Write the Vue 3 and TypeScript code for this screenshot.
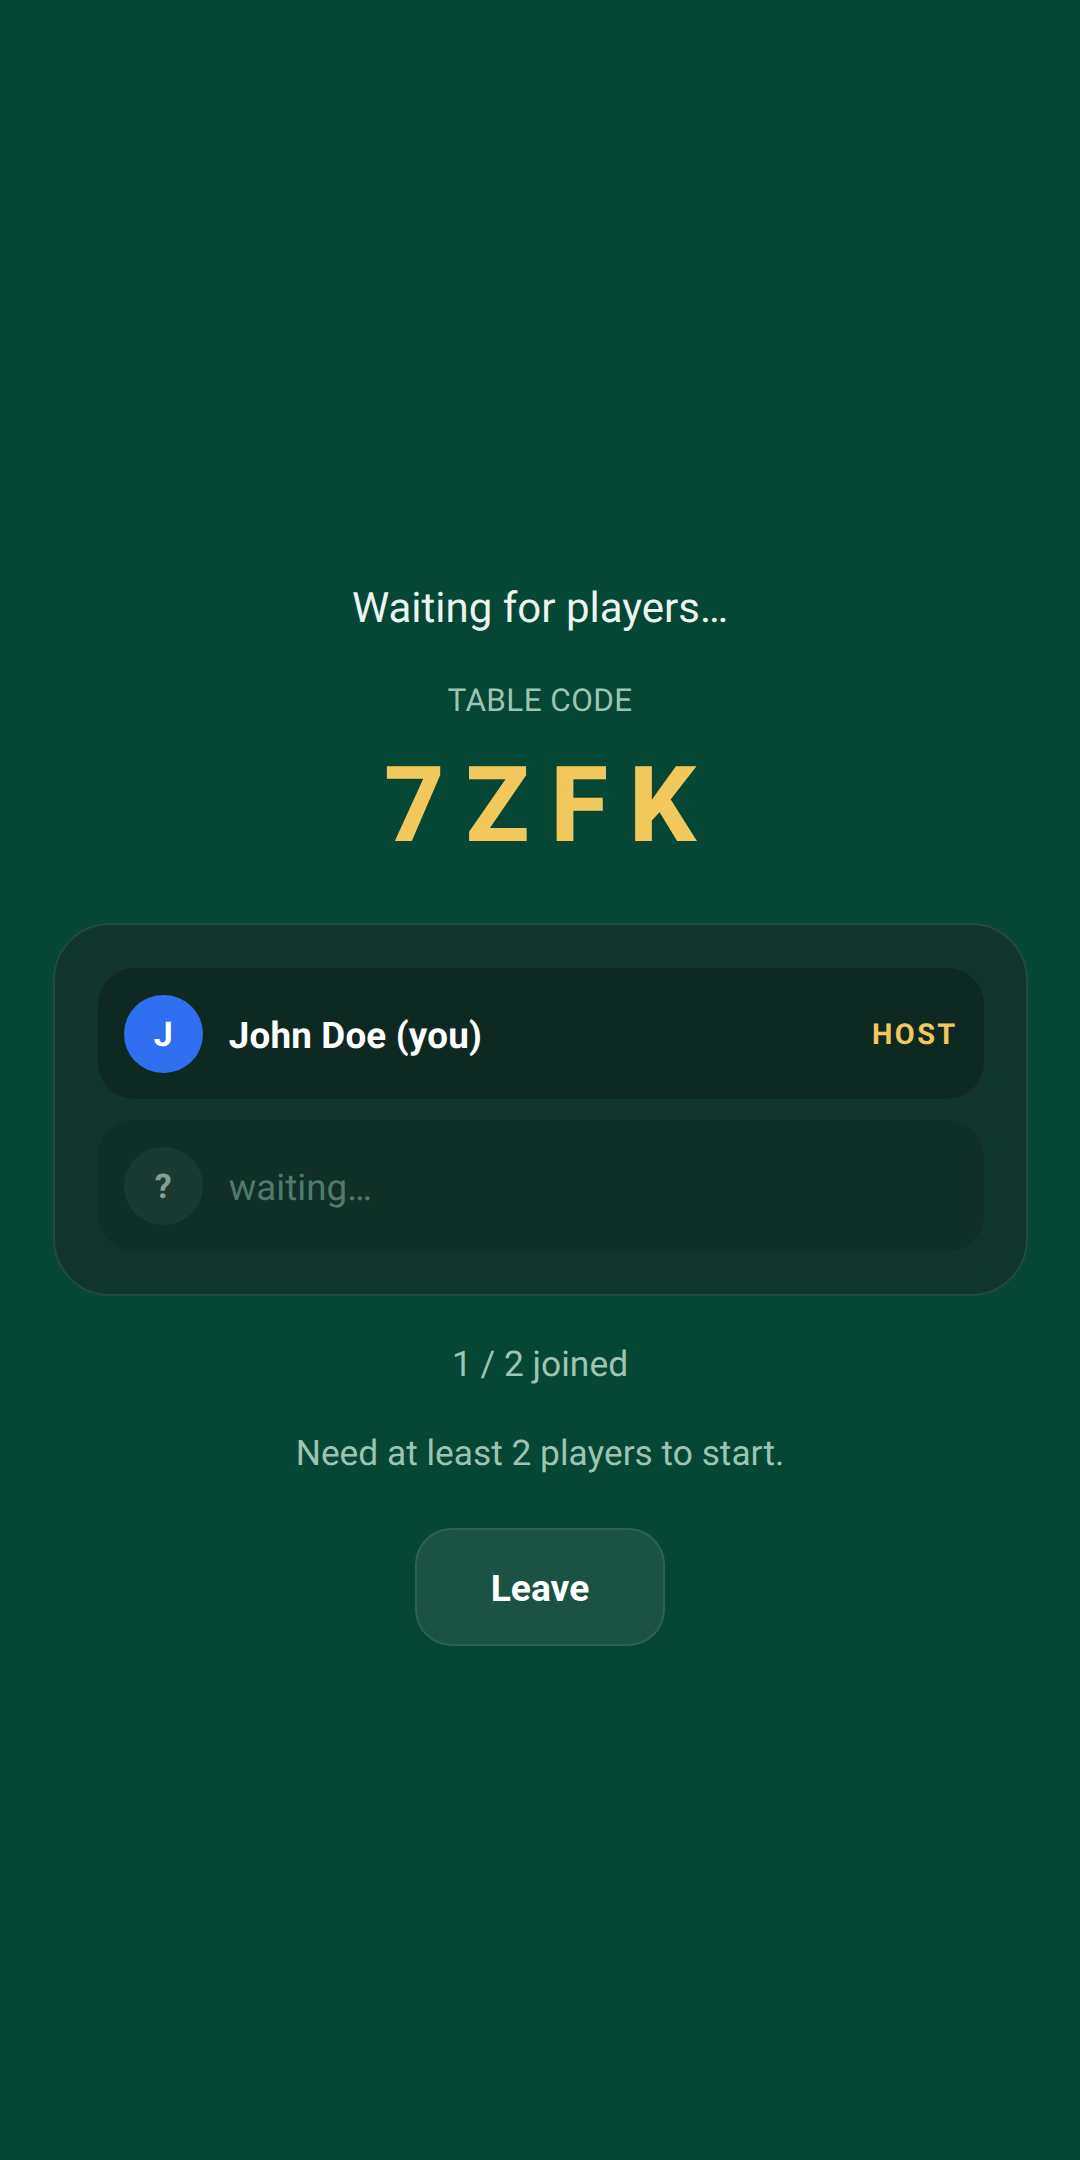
<script setup lang="ts">
interface Player { initial: string; name: string; host: boolean; empty: boolean }
const players: Player[] = [
  { initial: 'J', name: 'John Doe (you)', host: true, empty: false },
  { initial: '?', name: 'waiting…', host: false, empty: true },
]
</script>

<template>
  <main class="page">
    <h1 class="title">Waiting for players…</h1>
    <div class="label">TABLE CODE</div>
    <div class="code">7ZFK</div>
    <section class="card">
      <div v-for="p in players" :key="p.name" class="row" :class="{ empty: p.empty }">
        <div class="avatar">{{ p.initial }}</div>
        <div class="name">{{ p.name }}</div>
        <div v-if="p.host" class="host">HOST</div>
      </div>
    </section>
    <p class="joined">1 / 2 joined</p>
    <p class="need">Need at least 2 players to start.</p>
    <button class="leave" type="button">Leave</button>
  </main>
</template>

<style>
html, body { margin: 0; background: #054634; }
</style>

<style scoped>
.page {
  box-sizing: border-box;
  width: 1080px;
  height: 2160px;
  padding: 584px 52.5px 0;
  display: flex;
  flex-direction: column;
  align-items: center;
  background: #054634;
  font-family: Roboto, "Liberation Sans", sans-serif;
  color: #fff;
  text-rendering: geometricPrecision;
}
.title {
  margin: 0;
  font-size: 42px;
  line-height: 49px;
  font-weight: 400;
  color: #eaf5f0;
}
.label {
  margin-top: 49px;
  font-size: 31.5px;
  line-height: 37px;
  letter-spacing: 0.4px;
  color: #9cc4b2;
}
.code {
  margin-top: 25px;
  padding-left: 21px;
  font-size: 105px;
  line-height: 123px;
  font-weight: 800;
  letter-spacing: 21px;
  color: #f2c85c;
}
.card {
  box-sizing: border-box;
  width: 100%;
  margin-top: 56.4px;
  padding: 43px 41.6px 43px 43px;
  display: flex;
  flex-direction: column;
  gap: 21px;
  background: #10362b;
  border: 2.6px solid #214a3e;
  border-radius: 57px;
}
.row {
  height: 131px;
  box-sizing: border-box;
  padding: 0 26.25px;
  display: flex;
  align-items: center;
  gap: 26.25px;
  background: #0e2922;
  border-radius: 36.75px;
}
.row.empty { background: #0f2f27; }
.avatar {
  width: 78.75px;
  height: 78.75px;
  padding-top: 2px;
  box-sizing: border-box;
  border-radius: 50%;
  background: #2f6ff0;
  display: flex;
  align-items: center;
  justify-content: center;
  font-size: 34px;
  font-weight: 700;
  flex: none;
}
.empty .avatar { background: #1a3a31; color: #869c96; }
.name {
  flex: 1;
  padding-top: 3px;
  font-size: 36.75px;
  font-weight: 700;
  letter-spacing: 0.2px;
}
.empty .name { font-weight: 400; color: #4f7a6d; letter-spacing: 0; }
.host {
  padding-top: 3px;
  font-size: 28.9px;
  font-weight: 700;
  letter-spacing: 2.4px;
  color: #f2c85c;
}
.joined {
  margin: 46.4px 0 0;
  font-size: 35.4px;
  line-height: 42px;
  color: #9cc4b2;
}
.need {
  margin: 47px 0 0;
  font-size: 35.3px;
  line-height: 42px;
  color: #9cc4b2;
}
.leave {
  margin-top: 54.6px;
  box-sizing: border-box;
  width: 250px;
  height: 118px;
  padding-top: 3px;
  background: #1a5244;
  border: 2.6px solid #2c6252;
  border-radius: 36.75px;
  color: #fff;
  font-family: inherit;
  font-size: 37.2px;
  font-weight: 700;
}
</style>
